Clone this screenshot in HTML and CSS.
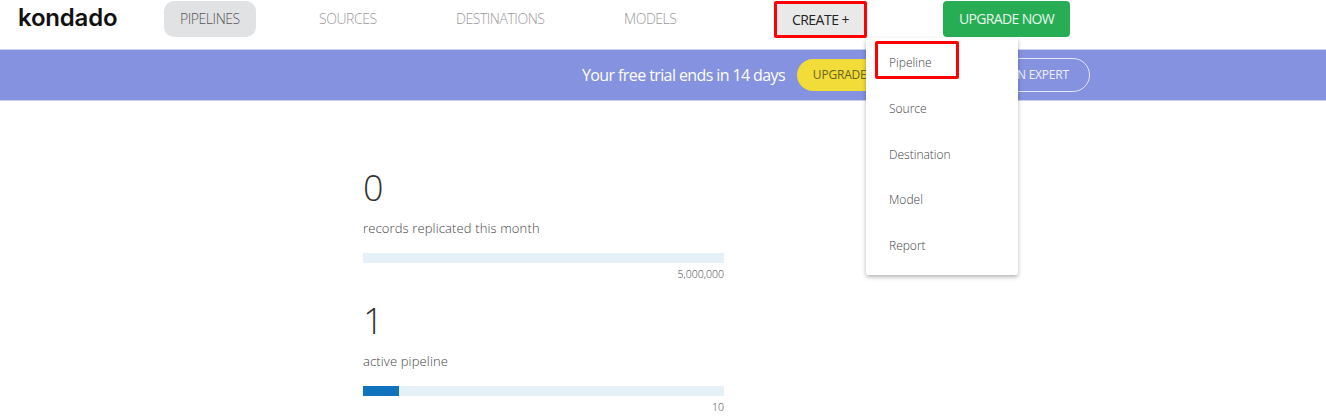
FILE: index.html
```html
<!DOCTYPE html>
<html lang="en">
<head>
    <meta charset="UTF-8">
    <meta name="viewport" content="width=device-width, initial-scale=1.0">
    <title>Kondado</title>
    <link rel="stylesheet" href="styles.css">
</head>
<body>

    <header class="topbar">
        <div class="logo">kondado</div>
        <a class="nav-item active">PIPELINES</a>
        <a class="nav-item">SOURCES</a>
        <a class="nav-item">DESTINATIONS</a>
        <a class="nav-item">MODELS</a>
        <div class="create-wrap">
            <a class="create-btn">CREATE +</a>
            <!-- Create dropdown -->
            <ul class="create-menu">
                <li class="marked">Pipeline</li>
                <li>Source</li>
                <li>Destination</li>
                <li>Model</li>
                <li>Report</li>
            </ul>
        </div>
        <a class="upgrade-now">UPGRADE NOW</a>
    </header>

    <div class="trial-banner">
        <span class="trial-text">Your free trial ends in 14 days</span>
        <a class="pill pill-yellow">UPGRADE NOW</a>
        <a class="pill pill-outline">TALK TO AN EXPERT</a>
    </div>

    <main class="stats">
        <div class="stat">
            <div class="stat-value">0</div>
            <div class="stat-label">records replicated this month</div>
            <div class="bar"></div>
            <div class="bar-max">5,000,000</div>
        </div>
        <div class="stat">
            <div class="stat-value">1</div>
            <div class="stat-label">active pipeline</div>
            <div class="bar"><div class="bar-fill" style="width: 10%"></div></div>
            <div class="bar-max">10</div>
        </div>
    </main>

</body>
</html>
```

FILE: styles.css
```css
body {
    font-family: "Open Sans", sans-serif;
    margin: 0;
    padding: 0;
    background-color: #fff;
    color: #555;
    overflow: hidden;
}

.topbar {
    display: flex;
    align-items: flex-start;
    height: 49px;
    box-sizing: border-box;
    padding: 1px 0 0 18px;
    font-size: 14px;
    font-weight: 300;
    letter-spacing: -0.45px;
}

.logo {
    width: 99px;
    margin-right: 47px;
    font-family: Inter, sans-serif;
    font-size: 24px;
    font-weight: 600;
    line-height: 33px;
    letter-spacing: -0.2px;
    color: #111;
}

.nav-item {
    width: 60px;
    padding: 0 16px;
    margin-right: 47px;
    line-height: 36px;
    color: #999;
    border-radius: 10px;
    white-space: nowrap;
}

.nav-item:nth-of-type(2) {
    width: 58px;
}

.nav-item:nth-of-type(3) {
    width: 89px;
}

.nav-item:nth-of-type(4) {
    width: 52px;
}

.nav-item.active {
    background-color: #e1e2e4;
    color: #555;
}

.create-wrap {
    position: relative;
    margin-left: 35px;
    margin-right: 76px;
}

.create-btn {
    display: block;
    box-sizing: border-box;
    width: 93px;
    height: 37px;
    line-height: 31px;
    text-align: center;
    background-color: #e9e9e9;
    border: 3px solid #f00;
    border-radius: 2px;
    color: #222;
    font-weight: 400;
    letter-spacing: -0.5px;
}

.create-menu {
    position: absolute;
    top: 37px;
    left: 92px;
    z-index: 2;
    width: 152px;
    height: 237px;
    box-sizing: border-box;
    margin: 0;
    padding: 3px 9px 0;
    list-style: none;
    background-color: #fff;
    border-radius: 2px;
    box-shadow: 0 2px 4px rgba(0, 0, 0, 0.3);
    font-size: 12px;
    font-weight: 300;
    letter-spacing: 0;
    color: #444;
}

.create-menu li {
    height: 38px;
    line-height: 44px;
    margin-bottom: 7.75px;
    padding-left: 14px;
}

.create-menu li.marked {
    box-sizing: border-box;
    width: 84px;
    padding-left: 11px;
    border: 3px solid #f00;
    border-radius: 2px;
    line-height: 38px;
}

.upgrade-now {
    width: 127px;
    line-height: 36px;
    text-align: center;
    background-color: #27ae55;
    color: #e8f6ec;
    border-radius: 4px;
    font-weight: 400;
    letter-spacing: -0.65px;
}

.trial-banner {
    display: flex;
    align-items: center;
    height: 52px;
    box-sizing: border-box;
    padding-left: 582px;
    background-color: #8492e0;
    border-top: 1px solid #c9d0f0;
    border-bottom: 1px solid #c9d0f0;
    color: #fff;
}

.trial-text {
    font-size: 16px;
    letter-spacing: -0.6px;
    margin-right: 12px;
}

.pill {
    box-sizing: border-box;
    border-radius: 17px;
    font-size: 12px;
    letter-spacing: -0.2px;
    text-align: center;
}

.pill-yellow {
    width: 117px;
    height: 32px;
    line-height: 32px;
    background-color: #f2dc3a;
    color: #6b6320;
    margin-right: 26px;
}

.pill-outline {
    width: 150px;
    height: 34px;
    line-height: 32px;
    border: 1px solid #e4e7f8;
    color: #eef0fb;
}

.stats {
    width: 361px;
    margin: 63px 0 0 363px;
}

.stat {
    height: 133px;
}

.stat-value {
    font-size: 36px;
    font-weight: 300;
    line-height: 48px;
    color: #333;
}

.stat-label {
    margin-top: 6px;
    font-size: 13px;
    font-weight: 300;
    letter-spacing: 0.13px;
    line-height: 20px;
    color: #444;
}

.bar {
    height: 10px;
    margin-top: 15px;
    background-color: #e6f0f7;
}

.bar-fill {
    height: 100%;
    background-color: #0f73bd;
}

.bar-max {
    margin-top: 3px;
    font-size: 10.5px;
    font-weight: 300;
    line-height: 16px;
    text-align: right;
    color: #444;
}
```
